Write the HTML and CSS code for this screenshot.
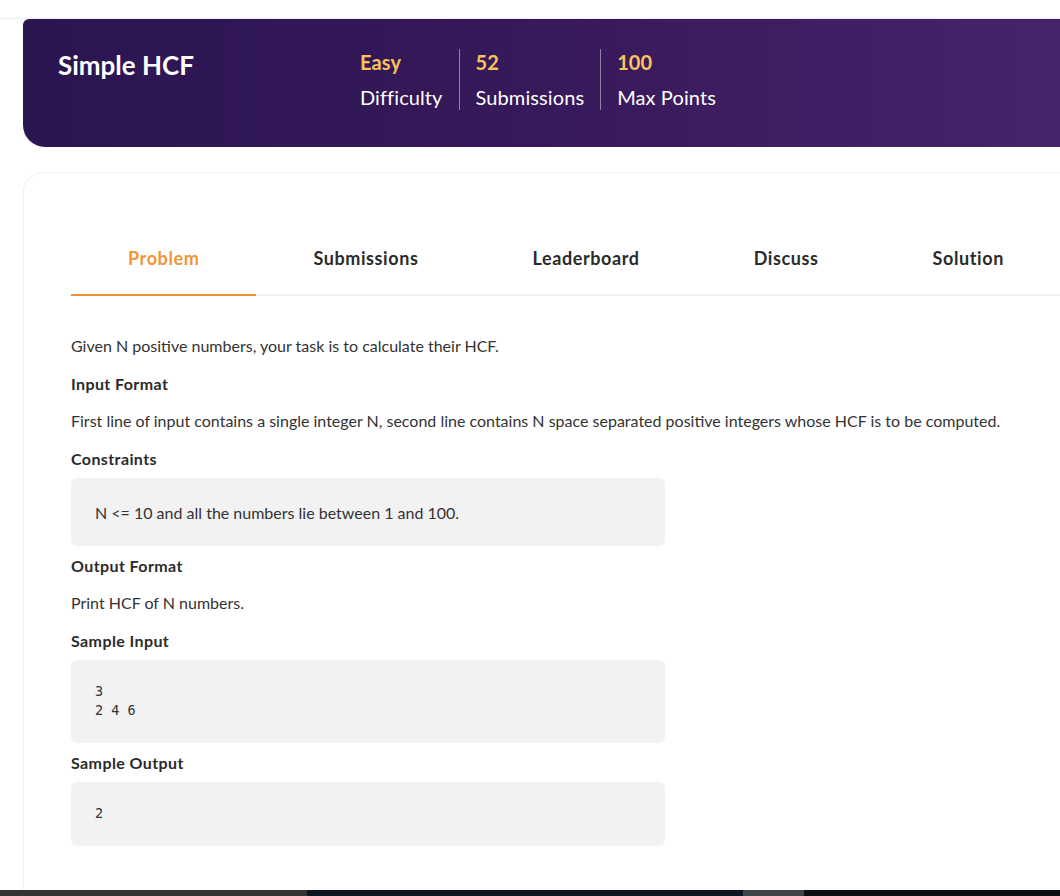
FILE: index.html
```html
<!DOCTYPE html>
<html lang="en">
<head>
<meta charset="utf-8">
<title>Simple HCF</title>
<link rel="stylesheet" href="styles.css">
</head>
<body>
<div class="topbar"></div>
<main class="page">
  <header class="hero">
    <h1 class="hero-title">Simple HCF</h1>
    <div class="stats">
      <div class="stat first">
        <div class="stat-value">Easy</div>
        <div class="stat-label">Difficulty</div>
      </div>
      <div class="stat">
        <div class="stat-value">52</div>
        <div class="stat-label">Submissions</div>
      </div>
      <div class="stat">
        <div class="stat-value">100</div>
        <div class="stat-label">Max Points</div>
      </div>
    </div>
  </header>

  <section class="card">
    <nav class="tabs">
      <a class="tab active">Problem</a>
      <a class="tab">Submissions</a>
      <a class="tab">Leaderboard</a>
      <a class="tab">Discuss</a>
      <a class="tab">Solution</a>
    </nav>
    <div class="content">
      <p class="text">Given N positive numbers, your task is to calculate their HCF.</p>
      <h3 class="heading">Input Format</h3>
      <p class="text">First line of input contains a single integer N, second line contains N space separated positive integers whose HCF is to be computed.</p>
      <h3 class="heading">Constraints</h3>
      <div class="box box-text">N &lt;= 10 and all the numbers lie between 1 and 100.</div>
      <h3 class="heading">Output Format</h3>
      <p class="text">Print HCF of N numbers.</p>
      <h3 class="heading">Sample Input</h3>
      <pre class="box box-code">3
2 4 6</pre>
      <h3 class="heading">Sample Output</h3>
      <pre class="box box-code single">2</pre>
    </div>
  </section>
</main>
<div class="taskbar">
  <span class="seg seg1"></span><span class="seg seg2"></span><span class="seg seg3"></span><span class="seg seg4"></span>
</div>
</body>
</html>
```
FILE: styles.css
```css
html, body {
  margin: 0;
  padding: 0;
  background: #ffffff;
  overflow: hidden;
}
body {
  font-family: Lato, "Noto Sans", sans-serif;
  color: #333333;
  height: 896px;
}
.topbar {
  height: 18px;
  border-bottom: 1px solid #ececec;
  background: #fff;
}
.page {
  margin-left: 23px;
  margin-right: -60px;
}
.hero {
  display: flex;
  align-items: flex-start;
  background: linear-gradient(90deg, #2b1550 0%, #36195a 45%, #47256c 100%);
  border-radius: 6px 0 0 22px;
  padding: 30px 0 37px 35px;
  height: 61px;
}
.hero-title {
  margin: 0;
  width: 302px;
  color: #ffffff;
  font-size: 26px;
  font-weight: 700;
  line-height: 32px;
}
.stats {
  display: flex;
}
.stat {
  padding: 0 16px 0 16px;
  border-left: 1px solid rgba(255, 255, 255, 0.45);
  height: 61px;
}
.stat.first {
  padding-left: 0;
  border-left: none;
}
.stat-value {
  color: #f9c35b;
  font-size: 20px;
  font-weight: 700;
  line-height: 26px;
  letter-spacing: 0.1px;
}
.stat-label {
  margin-top: 9px;
  color: #ffffff;
  font-size: 20px;
  line-height: 26px;
  letter-spacing: 0.1px;
}
.card {
  margin-top: 25px;
  border: 1px solid #f0f0f0;
  border-radius: 20px 0 0 0;
  padding: 0 0 0 47px;
  height: 760px;
}
.tabs {
  display: flex;
  padding-top: 74px;
  border-bottom: 2px solid #efefef;
}
.tab {
  padding: 0 57px 25px;
  font-size: 18px;
  font-weight: 700;
  line-height: 22px;
  letter-spacing: 0.6px;
  color: #2b2b2b;
  margin-bottom: -2px;
  border-bottom: 2px solid transparent;
}
.tab.active {
  color: #f0953a;
  border-bottom-color: #ef9233;
}
.content {
  padding-top: 39px;
  width: 980px;
}
.text {
  margin: 0 0 16px;
  font-size: 16px;
  line-height: 22px;
  color: #333;
}
.heading {
  margin: 0 0 15px;
  font-size: 16px;
  font-weight: 700;
  line-height: 22px;
  letter-spacing: 0.4px;
  color: #2b2b2b;
}
.box {
  width: 594px;
  box-sizing: border-box;
  background: #f2f2f2;
  border-radius: 6px;
  margin: -7px 0 9px;
}
.box-text {
  padding: 24px 24px 22px;
  font-size: 16px;
  line-height: 22px;
}
.box-code {
  font-family: "DejaVu Sans Mono", monospace;
  font-size: 13.5px;
  line-height: 19px;
  padding: 22px 24px 23px;
  color: #333;
  white-space: pre;
}
.box-code.single {
  padding: 22px 24px 23px;
}
.taskbar {
  position: fixed;
  left: 0;
  right: 0;
  bottom: 0;
  height: 6px;
  display: flex;
}
.seg { display: block; height: 100%; }
.seg1 { width: 307px; background: #333333; }
.seg2 { width: 436px; background: #0b1620; }
.seg3 { width: 61px; background: #3e4346; }
.seg4 { flex: 1; background: #0d1013; }
```
